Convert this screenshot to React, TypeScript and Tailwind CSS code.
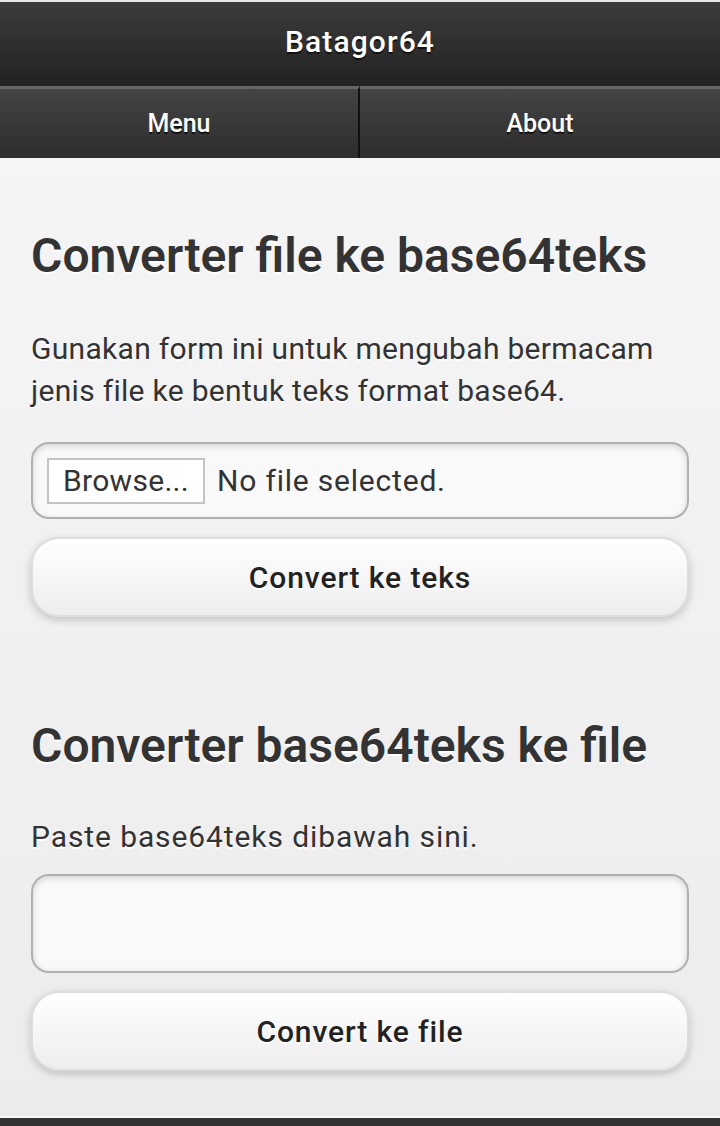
export default function App() {
  return (
    <div className="min-h-[1126px] flex flex-col bg-gradient-to-b from-[#f6f6f6] to-[#ececec] font-['Roboto',sans-serif] text-[#333]">
      {/* Header */}
      <header className="border-t-2 border-[#e8e8e8] bg-gradient-to-b from-[#3c3c3c] to-[#222] h-[86px] flex items-center justify-center pb-[5px]">
        <h1 className="text-white text-[30px] tracking-[1.1px] font-medium [text-shadow:0_2px_0_#111]">Batagor64</h1>
      </header>

      {/* Navbar */}
      <nav className="grid grid-cols-2 h-[72px] bg-[#111]">
        <a className="flex items-center justify-center border-t-[3px] border-t-[#666] border-r-2 border-r-[#111] bg-gradient-to-b from-[#444] to-[#2d2d2d] text-white text-[25px] font-medium [text-shadow:0_2px_0_#111]">
          Menu
        </a>
        <a className="flex items-center justify-center border-t-[3px] border-t-[#666] bg-gradient-to-b from-[#444] to-[#2d2d2d] text-white text-[25px] font-medium [text-shadow:0_2px_0_#111]">
          About
        </a>
      </nav>

      <main className="flex-1 px-[31px] pt-[66px]">
        {/* file -> base64 */}
        <section>
          <h2 className="text-[48px] font-semibold leading-[64px] [text-shadow:0_2px_0_#fff]">Converter file ke base64teks</h2>
          <p className="mt-[40px] text-[30px] tracking-[0.3px] leading-[42px] [text-shadow:0_2px_0_#fff]">
            Gunakan form ini untuk mengubah bermacam jenis file ke bentuk teks format base64.
          </p>
          <div className="mt-[30px] h-[77px] rounded-[18px] border-2 border-[#b0b0b0] bg-[#f9f9f9] shadow-[inset_0_2px_6px_rgba(0,0,0,0.15)] flex items-center px-[14px] gap-[12px]">
            <span className="h-[46px] px-[14px] flex items-center border-2 border-[#c4c4c4] bg-white text-[30px] tracking-[0.3px]">Browse...</span>
            <span className="text-[30px] tracking-[0.8px]">No file selected.</span>
          </div>
          <button className="mt-[18px] w-full h-[80px] rounded-[28px] border-2 border-[#ddd] bg-gradient-to-b from-white to-[#ededed] shadow-[0_3px_8px_rgba(0,0,0,0.2)] text-[30px] tracking-[0.9px] font-medium text-[#222] [text-shadow:0_2px_0_#fff]">
            Convert ke teks
          </button>
        </section>

        {/* base64 -> file */}
        <section className="mt-[97px]">
          <h2 className="text-[48px] font-semibold leading-[64px] [text-shadow:0_2px_0_#fff]">Converter base64teks ke file</h2>
          <p className="mt-[38px] text-[30px] tracking-[0.9px] leading-[42px] [text-shadow:0_2px_0_#fff]">Paste base64teks dibawah sini.</p>
          <textarea className="mt-[16px] block w-full h-[99px] rounded-[18px] border-2 border-[#b0b0b0] bg-[#f9f9f9] shadow-[inset_0_2px_6px_rgba(0,0,0,0.15)] resize-none outline-none p-3 text-[28px]" />
          <button className="mt-[18px] w-full h-[80px] rounded-[28px] border-2 border-[#ddd] bg-gradient-to-b from-white to-[#ededed] shadow-[0_3px_8px_rgba(0,0,0,0.2)] text-[30px] tracking-[0.9px] font-medium text-[#222] [text-shadow:0_2px_0_#fff]">
            Convert ke file
          </button>
        </section>
      </main>

      <footer className="h-[10px] border-t-2 border-[#f8f8f8] bg-[#333]" />
    </div>
  )
}
